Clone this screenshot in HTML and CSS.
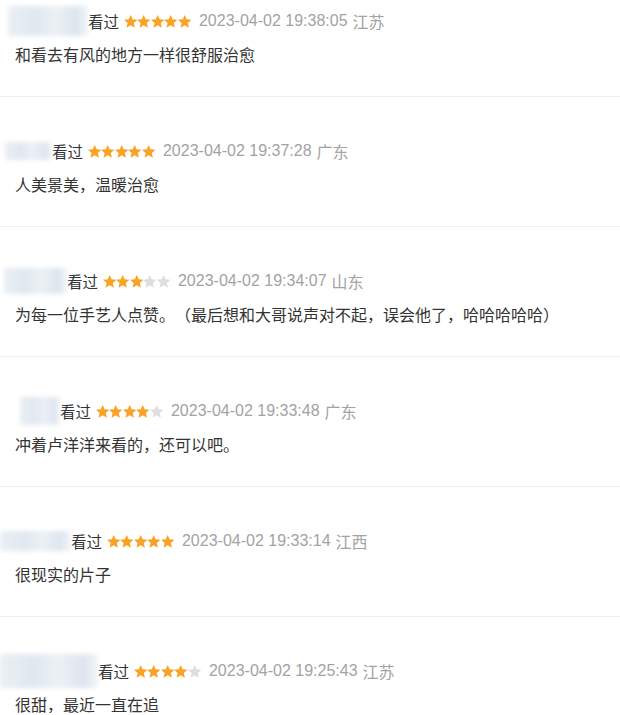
FILE: index.html
```html
<!DOCTYPE html>
<html lang="zh-CN">
<head>
    <meta charset="UTF-8">
    <meta name="viewport" content="width=device-width, initial-scale=1.0">
    <title>短评</title>
    <link rel="stylesheet" href="styles.css">
</head>
<body>
    <svg class="defs" width="0" height="0">
        <symbol id="star" viewBox="1 1.2 22 21.2">
            <path d="M12 1.2l3.2 7 7.8.8-5.9 5.2 1.8 7.8L12 18l-6.9 4 1.8-7.8L1 9l7.8-.8z"/>
        </symbol>
    </svg>

    <div class="comment-list">
        <div class="comment">
            <div class="comment-head">
                <span class="name n1"></span>
                <span class="watched">看过</span>
                <span class="stars">
                    <svg class="on"><use href="#star"/></svg><svg class="on"><use href="#star"/></svg><svg class="on"><use href="#star"/></svg><svg class="on"><use href="#star"/></svg><svg class="on"><use href="#star"/></svg>
                </span>
                <span class="time">2023-04-02 19:38:05</span>
                <span class="place">江苏</span>
            </div>
            <p class="comment-text">和看去有风的地方一样很舒服治愈</p>
        </div>

        <div class="comment">
            <div class="comment-head">
                <span class="name n2"></span>
                <span class="watched">看过</span>
                <span class="stars">
                    <svg class="on"><use href="#star"/></svg><svg class="on"><use href="#star"/></svg><svg class="on"><use href="#star"/></svg><svg class="on"><use href="#star"/></svg><svg class="on"><use href="#star"/></svg>
                </span>
                <span class="time">2023-04-02 19:37:28</span>
                <span class="place">广东</span>
            </div>
            <p class="comment-text">人美景美，温暖治愈</p>
        </div>

        <div class="comment">
            <div class="comment-head">
                <span class="name n3"></span>
                <span class="watched">看过</span>
                <span class="stars">
                    <svg class="on"><use href="#star"/></svg><svg class="on"><use href="#star"/></svg><svg class="on"><use href="#star"/></svg><svg><use href="#star"/></svg><svg><use href="#star"/></svg>
                </span>
                <span class="time">2023-04-02 19:34:07</span>
                <span class="place">山东</span>
            </div>
            <p class="comment-text">为每一位手艺人点赞。（最后想和大哥说声对不起，误会他了，哈哈哈哈哈）</p>
        </div>

        <div class="comment">
            <div class="comment-head">
                <span class="name n4"></span>
                <span class="watched">看过</span>
                <span class="stars">
                    <svg class="on"><use href="#star"/></svg><svg class="on"><use href="#star"/></svg><svg class="on"><use href="#star"/></svg><svg class="on"><use href="#star"/></svg><svg><use href="#star"/></svg>
                </span>
                <span class="time">2023-04-02 19:33:48</span>
                <span class="place">广东</span>
            </div>
            <p class="comment-text">冲着卢洋洋来看的，还可以吧。</p>
        </div>

        <div class="comment">
            <div class="comment-head">
                <span class="name n5"></span>
                <span class="watched">看过</span>
                <span class="stars">
                    <svg class="on"><use href="#star"/></svg><svg class="on"><use href="#star"/></svg><svg class="on"><use href="#star"/></svg><svg class="on"><use href="#star"/></svg><svg class="on"><use href="#star"/></svg>
                </span>
                <span class="time">2023-04-02 19:33:14</span>
                <span class="place">江西</span>
            </div>
            <p class="comment-text">很现实的片子</p>
        </div>

        <div class="comment">
            <div class="comment-head">
                <span class="name n6"></span>
                <span class="watched">看过</span>
                <span class="stars">
                    <svg class="on"><use href="#star"/></svg><svg class="on"><use href="#star"/></svg><svg class="on"><use href="#star"/></svg><svg class="on"><use href="#star"/></svg><svg><use href="#star"/></svg>
                </span>
                <span class="time">2023-04-02 19:25:43</span>
                <span class="place">江苏</span>
            </div>
            <p class="comment-text">很甜，最近一直在追</p>
        </div>
    </div>
</body>
</html>
```

FILE: styles.css
```css
body {
    margin: 0;
    background: #fff;
    font-family: "Liberation Sans", "Noto Sans CJK SC", sans-serif;
    color: #333;
    text-spacing-trim: space-all;
}
.defs {
    position: absolute;
    width: 0;
    height: 0;
}
.comment-list {
    width: 620px;
}
.comment {
    padding: 44px 0 32px;
    border-bottom: 1px solid #efefef;
}
.comment:first-child {
    padding-top: 11px;
}
.comment-head {
    display: flex;
    align-items: center;
    height: 20px;
    font-size: 16px;
    line-height: 20px;
}
.name {
    height: 22px;
    background: linear-gradient(90deg, #eaeff4 0%, #e0e8f0 35%, #edf1f5 60%, #dde5ee 85%, #f2f5f8 100%);
    filter: blur(2px);
}
.n1 { margin-left: 8px; width: 80px; height: 30px; }
.n2 { margin-left: 5px; width: 47px; height: 18px; }
.n3 { margin-left: 4px; width: 63px; height: 26px; }
.n4 { margin-left: 20px; width: 40px; height: 28px; }
.n5 { margin-left: 0; width: 71px; height: 20px; }
.n6 { margin-left: 0; width: 98px; height: 34px; }

.watched {
    color: #333;
    font-family: "Noto Sans CJK SC", sans-serif;
    font-size: 15.5px;
}
.stars {
    display: flex;
    margin-left: 5px;
}
.stars svg {
    width: 13.4px;
    height: 13px;
    fill: #dedede;
}
.stars svg.on {
    fill: #f8a326;
}
.time {
    margin-left: 8px;
    color: #a3a3a3;
}
.place {
    margin-left: 5px;
    color: #a3a3a3;
    font-family: "Noto Sans CJK SC", sans-serif;
}
.comment-text {
    margin: 13px 0 0 15px;
    font-family: "Noto Sans CJK SC", sans-serif;
    font-size: 16px;
    line-height: 20px;
    color: #333;
}
```
